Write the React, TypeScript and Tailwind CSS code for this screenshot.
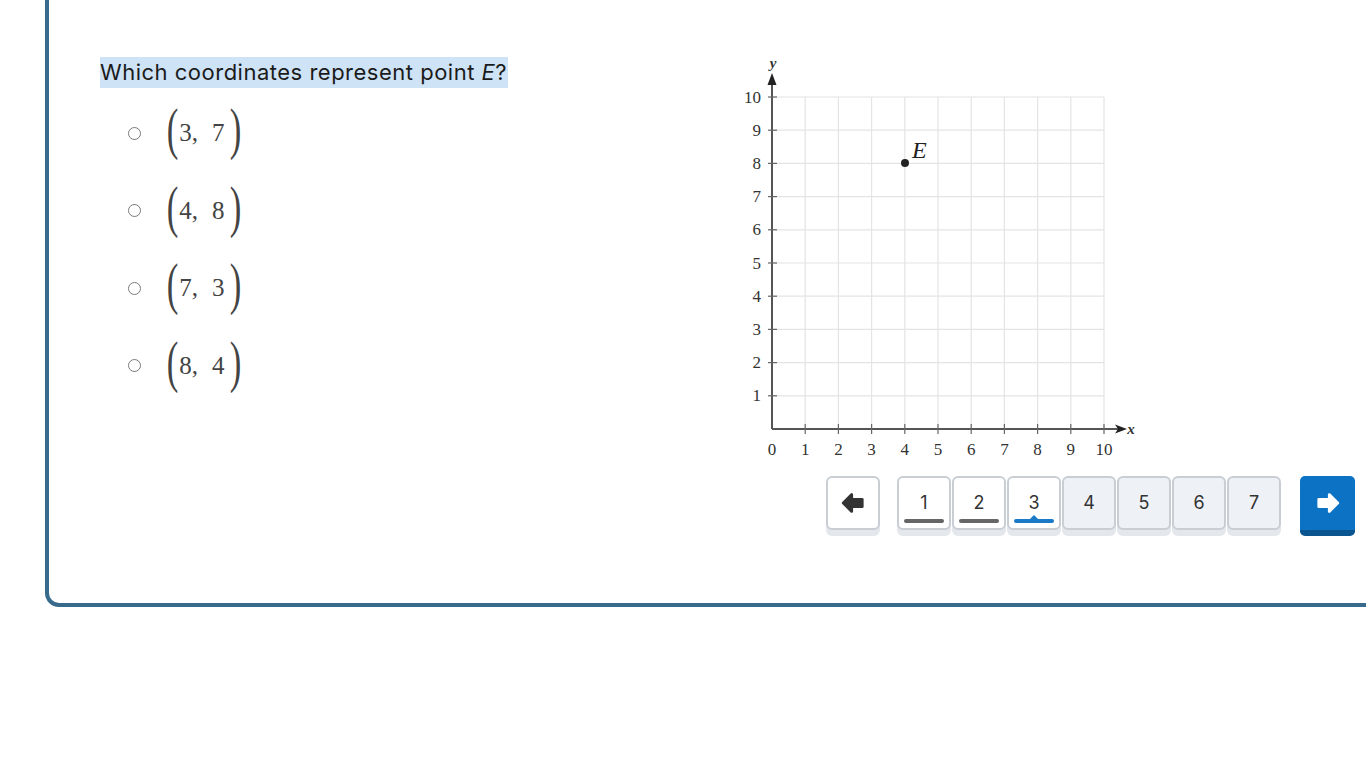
import React from 'react'

const options = [
  ['3', '7'],
  ['4', '8'],
  ['7', '3'],
  ['8', '4'],
]

const serif = { fontFamily: '"Liberation Serif", "DejaVu Serif", serif' }

const Arrow = ({ dir, color }: { dir: 'left' | 'right'; color: string }) => (
  <svg width="26" height="26" viewBox="0 0 24 24" className={dir === 'right' ? 'rotate-180' : ''}>
    <path
      d="M3 12 L10.8 4.2 L10.8 8.6 L20.5 8.6 L20.5 15.4 L10.8 15.4 L10.8 19.8 Z"
      fill={color}
      stroke={color}
      strokeWidth="2.6"
      strokeLinejoin="round"
    />
  </svg>
)

const Graph = () => {
  const x0 = 772
  const y0 = 429
  const step = 33.2
  const ticks = Array.from({ length: 11 }, (_, i) => i)
  return (
    <svg width="420" height="410" viewBox="730 52 420 410" className="block">
      {/* grid */}
      {ticks.slice(1).map((i) => (
        <line key={'v' + i} x1={x0 + i * step} y1={y0 - 10 * step} x2={x0 + i * step} y2={y0} stroke="#e4e4e4" strokeWidth="1.2" />
      ))}
      {ticks.slice(1).map((i) => (
        <line key={'h' + i} x1={x0} y1={y0 - i * step} x2={x0 + 10 * step} y2={y0 - i * step} stroke="#e4e4e4" strokeWidth="1.2" />
      ))}
      {/* axes */}
      <line x1={x0} y1={y0} x2={x0} y2={82} stroke="#555" strokeWidth="2" />
      <line x1={x0} y1={y0} x2={1118} y2={y0} stroke="#555" strokeWidth="2" />
      <polygon points="772,73 767.5,85 776.5,85" fill="#222" />
      <polygon points="1127,429 1115,424.5 1118,429 1115,433.5" fill="#222" />
      {/* ticks */}
      {ticks.slice(1).map((i) => (
        <line key={'ty' + i} x1={x0 - 4} y1={y0 - i * step} x2={x0 + 5} y2={y0 - i * step} stroke="#666" strokeWidth="1.2" />
      ))}
      {ticks.slice(1).map((i) => (
        <line key={'tx' + i} x1={x0 + i * step} y1={y0 - 5} x2={x0 + i * step} y2={y0 + 5} stroke="#666" strokeWidth="1.2" />
      ))}
      {/* labels */}
      <g style={serif} fontSize="17" fill="#333">
        {ticks.slice(1).map((i) => (
          <text key={'ly' + i} x={761} y={y0 - i * step + 5.5} textAnchor="end">
            {i}
          </text>
        ))}
        {ticks.map((i) => (
          <text key={'lx' + i} x={x0 + i * step} y={455} textAnchor="middle">
            {i}
          </text>
        ))}
        <text x={773} y={68} textAnchor="middle" fontStyle="italic" fontWeight="bold" fontSize="15">
          y
        </text>
        <text x={1131} y={434} textAnchor="middle" fontStyle="italic" fontWeight="bold" fontSize="15">
          x
        </text>
        <text x={912} y={158} fontStyle="italic" fontSize="24" fill="#222">
          E
        </text>
      </g>
      <circle cx={905} cy={163} r={4} fill="#222" />
    </svg>
  )
}

const NavButton = ({ n, state }: { n: number; state: 'done' | 'current' | 'todo' }) => (
  <div
    className={
      'relative w-[54px] h-[54px] rounded-[6px] border-2 border-[#c9ced5] flex items-center justify-center text-[18px] text-[#333] shadow-[0_6px_0_#e4e7eb] ' +
      (state === 'todo' ? 'bg-[#eef1f5]' : 'bg-white')
    }
    style={{ fontFamily: 'Inter, "Noto Sans", sans-serif' }}
  >
    <span className="-mt-[1px]">{n}</span>
    {state === 'done' && <span className="absolute left-[5px] right-[5px] bottom-[5px] h-[4px] rounded-full bg-[#666]" />}
    {state === 'current' && (
      <>
        <span className="absolute left-[5px] right-[5px] bottom-[5px] h-[4px] rounded-full bg-[#1a7ac8]" />
        <span className="absolute left-1/2 -translate-x-1/2 bottom-[9px] w-0 h-0 border-l-[4px] border-r-[4px] border-b-[4px] border-l-transparent border-r-transparent border-b-[#1a7ac8]" />
      </>
    )}
  </div>
)

export default function App() {
  return (
    <div className="w-[1366px] h-[768px] overflow-hidden bg-white">
      <div className="ml-[45px] -mt-[20px] w-[1400px] h-[627px] border-4 border-[#386a8c] rounded-[14px] flex">
        {/* Question */}
        <div className="w-[681px] pl-[51px] pt-[73px]">
          <p
            className="inline-block bg-[#cfe3f6] text-[#1b1b1b] text-[22px] leading-[31px] tracking-[0.5px] pr-[1px]"
            style={{ fontFamily: 'Inter, "Noto Sans", sans-serif' }}
          >
            Which coordinates represent point <i>E</i>?
          </p>
          <div className="mt-[21px] flex flex-col gap-[29.5px]">
            {options.map(([a, b]) => (
              <div key={a + b} className="flex items-center h-[48px]">
                <span className="ml-[28px] w-[13px] h-[13px] rounded-full border border-[#7a7a7a]" />
                <div className="ml-[22px] flex items-center text-[#444]" style={serif}>
                  <span className="text-[58px] leading-none font-light scale-x-[0.6] -mt-[8px]">(</span>
                  <span className="text-[25px] -ml-[3px]">{a},</span>
                  <span className="text-[25px] ml-[14px]">{b}</span>
                  <span className="text-[58px] leading-none font-light scale-x-[0.6] -mt-[8px] ml-[1px]">)</span>
                </div>
              </div>
            ))}
          </div>
        </div>

        {/* Graph and navigation */}
        <div className="flex flex-col pt-[68px]">
          <Graph />
          <div className="mt-[14px] ml-[96px] flex items-start">
            <div className="w-[54px] h-[54px] rounded-[6px] border-2 border-[#c9ced5] bg-white flex items-center justify-center shadow-[0_6px_0_#e4e7eb]">
              <Arrow dir="left" color="#333" />
            </div>
            <div className="ml-[17px] flex gap-[1px]">
              <NavButton n={1} state="done" />
              <NavButton n={2} state="done" />
              <NavButton n={3} state="current" />
              <NavButton n={4} state="todo" />
              <NavButton n={5} state="todo" />
              <NavButton n={6} state="todo" />
              <NavButton n={7} state="todo" />
            </div>
            <div className="ml-[19px] w-[55px] h-[60px] rounded-[5px] bg-[#0b72c4] border-b-[6px] border-[#0a5590] flex items-center justify-center">
              <Arrow dir="right" color="#fff" />
            </div>
          </div>
        </div>
      </div>
    </div>
  )
}
